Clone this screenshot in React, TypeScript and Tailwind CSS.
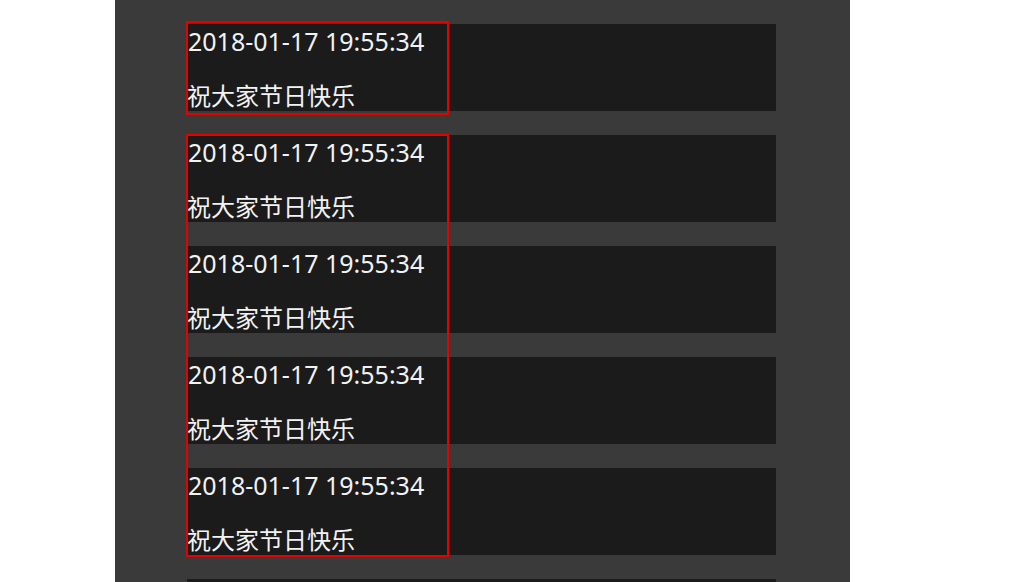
const messages = [
  { time: "2018-01-17 19:55:34", text: "祝大家节日快乐" },
  { time: "2018-01-17 19:55:34", text: "祝大家节日快乐" },
  { time: "2018-01-17 19:55:34", text: "祝大家节日快乐" },
  { time: "2018-01-17 19:55:34", text: "祝大家节日快乐" },
  { time: "2018-01-17 19:55:34", text: "祝大家节日快乐" },
  { time: "2018-01-17 19:55:34", text: "祝大家节日快乐" },
];

export default function App() {
  return (
    <div className="flex h-screen w-full bg-white font-['Noto_Sans','Noto_Sans_CJK_SC',sans-serif] overflow-hidden">
      <div className="relative ml-[115px] w-[735px] h-full bg-[#3a3a3a] pt-6 pl-[72px] overflow-hidden">
        {messages.map((m, i) => (
          <div key={i} className="w-[589px] h-[87px] mb-6 bg-[#1b1b1b] text-[#f2f2f2] text-[24px] flex flex-col justify-between">
            <p className="text-[25px] leading-[34px] pl-[1px]">{m.time}</p>
            <p className="leading-[30px]">{m.text}</p>
          </div>
        ))}
        {/* selection outlines */}
        <div className="absolute left-[71px] top-[21px] w-[263px] h-[94px] border-2 border-[#e60000]" />
        <div className="absolute left-[71px] top-[134px] w-[263px] h-[423px] border-2 border-[#e60000]" />
      </div>
    </div>
  );
}
